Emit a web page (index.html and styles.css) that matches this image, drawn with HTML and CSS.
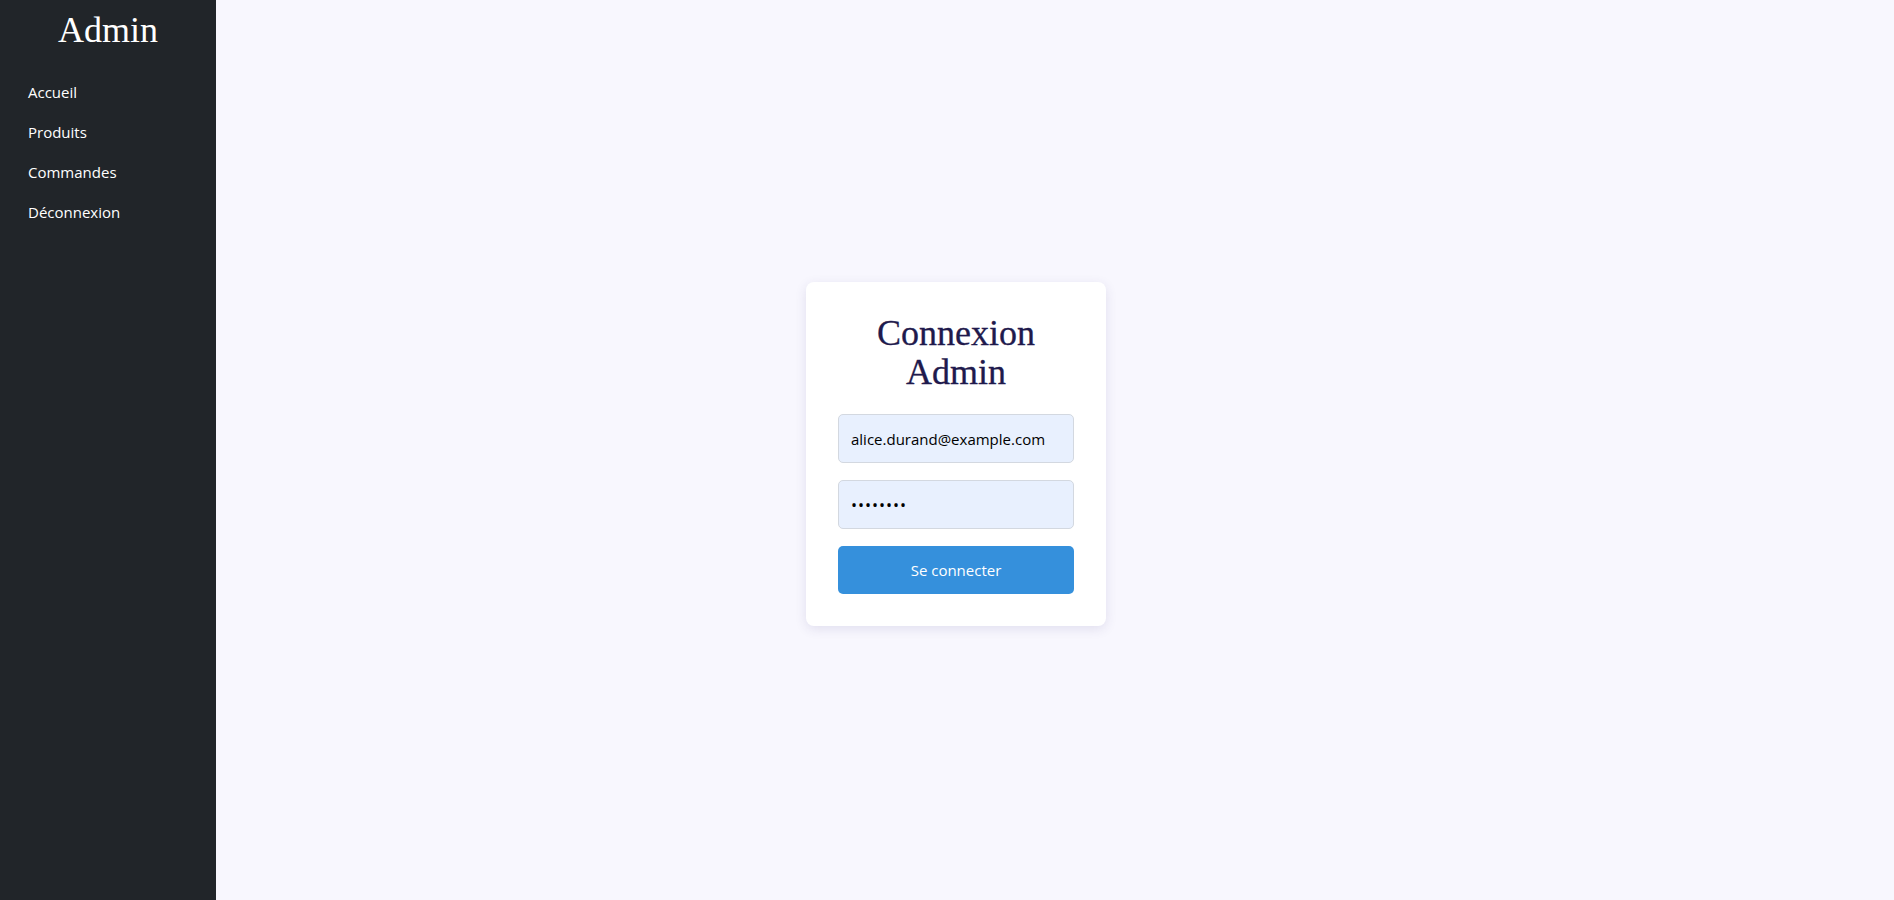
FILE: index.html
```html
<!DOCTYPE html>
<html lang="fr">
<head>
<meta charset="utf-8">
<title>Connexion Admin</title>
<link rel="stylesheet" href="styles.css">
</head>
<body>
<div class="layout">
  <aside class="sidebar">
    <h1 class="brand">Admin</h1>
    <nav class="nav">
      <a href="#">Accueil</a>
      <a href="#">Produits</a>
      <a href="#">Commandes</a>
      <a href="#">Déconnexion</a>
    </nav>
  </aside>
  <main class="main">
    <form class="card">
      <h2 class="card-title">Connexion<br>Admin</h2>
      <input class="field" type="email" value="alice.durand@example.com">
      <input class="field field-password" type="password" value="password">
      <button class="btn" type="button">Se connecter</button>
    </form>
  </main>
</div>
</body>
</html>
```

FILE: styles.css
```css
* { box-sizing: border-box; }
html, body { margin: 0; padding: 0; }
body {
  font-family: "Segoe UI", "Open Sans", "Noto Sans", sans-serif;
  background: #f8f7fe;
  color: #212529;
}
.layout {
  display: flex;
  min-height: 100vh;
}
.sidebar {
  width: 216px;
  flex: 0 0 216px;
  background: #212529;
  color: #fff;
  padding: 8px 0 0 28px;
}
.brand {
  margin: 0 0 29px -28px;
  text-align: center;
  font-family: "Liberation Serif", "DejaVu Serif", serif;
  font-weight: 400;
  font-size: 36px;
  line-height: 44px;
  color: #fff;
}
.nav {
  display: flex;
  flex-direction: column;
  gap: 18px;
}
.nav a {
  color: #fff;
  text-decoration: none;
  font-size: 15px;
  line-height: 22px;
}
.main {
  flex: 1;
  display: flex;
  align-items: center;
  justify-content: center;
  padding: 7px 198px 0 0;
}
.card {
  width: 300px;
  background: #fff;
  border-radius: 8px;
  box-shadow: 0 3px 12px rgba(60, 50, 120, 0.12);
  padding: 32px;
  display: flex;
  flex-direction: column;
}
.card-title {
  margin: 0 0 22px;
  text-align: center;
  font-family: "Liberation Serif", "DejaVu Serif", serif;
  font-weight: 400;
  font-size: 36px;
  line-height: 39px;
  color: #1f1a4d;
  -webkit-text-stroke: 0.3px #1f1a4d;
}
.field {
  height: 49px;
  width: 100%;
  margin: 0 0 17px;
  padding: 1px 12px 0;
  border: 1px solid #d3d8e0;
  border-radius: 5px;
  background: #e8f0fe;
  font-family: "Segoe UI", "Open Sans", "Noto Sans", sans-serif;
  font-size: 15px;
  color: #000;
}
.field-password {
  font-size: 16px;
  letter-spacing: 1px;
}
.btn {
  height: 48px;
  width: 100%;
  border: none;
  border-radius: 5px;
  background: #3590dc;
  color: #fff;
  font-family: "Segoe UI", "Open Sans", "Noto Sans", sans-serif;
  font-size: 15px;
}
```
